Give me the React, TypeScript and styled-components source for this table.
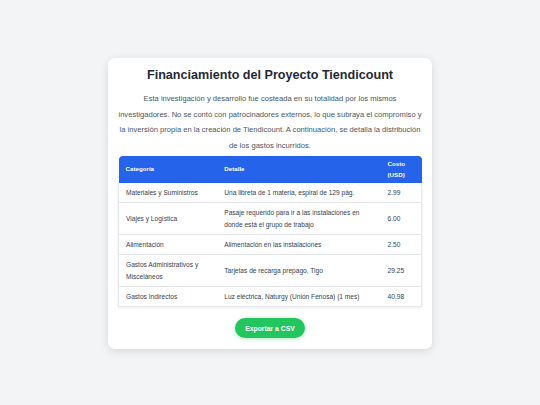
import styled, { createGlobalStyle } from "styled-components";

const GlobalStyle = createGlobalStyle`
    html, body {
        margin: 0;
        padding: 0;
        background: #f3f4f6;
        font-family: "Liberation Sans", Arial, sans-serif;
    }
`;

const Page = styled.div`
    width: 540px;
    height: 405px;
    display: flex;
    justify-content: center;
    align-items: flex-start;
    padding-top: 58px;
    box-sizing: border-box;
`;

const Card = styled.div`
    width: 324px;
    box-sizing: border-box;
    background: #ffffff;
    border-radius: 7px;
    box-shadow: 0 2px 8px rgba(0, 0, 0, 0.12);
    padding: 7px 10px 11px;
    display: flex;
    flex-direction: column;
    align-items: center;
`;

const Title = styled.h1`
    margin: 0;
    font-size: 12.6px;
    line-height: 20px;
    font-weight: 700;
    color: #1f2937;
    text-align: center;
`;

const Intro = styled.p`
    margin: 6px 0 3px;
    font-size: 7.6px;
    line-height: 15.5px;
    color: #4b5563;
    text-align: center;
`;

const Table = styled.table`
    width: 100%;
    border-collapse: collapse;
    box-shadow: 0 1px 3px rgba(0, 0, 0, 0.08);
    font-size: 6.6px;
    color: #374151;
`;

const HeadCell = styled.th<{ $w: number }>`
    width: ${(p) => p.$w}px;
    background: #2563eb;
    color: #ffffff;
    font-weight: 700;
    font-size: 6.2px;
    line-height: 10.5px;
    text-align: left;
    padding: 3px 7px;
    height: 27px;
    box-sizing: border-box;

    &:first-child {
        border-top-left-radius: 4px;
    }
    &:last-child {
        border-top-right-radius: 4px;
    }
`;

const Row = styled.tr`
    border-bottom: 1px solid #e5e7eb;
`;

const Cell = styled.td`
    padding: 3.5px 7px;
    line-height: 12px;
    vertical-align: middle;

    &:first-child {
        border-left: 1px solid #e5e7eb;
    }
    &:last-child {
        border-right: 1px solid #e5e7eb;
    }
`;

const ExportBtn = styled.button`
    flex: none;
    margin-top: 11px;
    width: 70px;
    height: 20px;
    padding: 0;
    border: 0;
    border-radius: 10px;
    background: #22c55e;
    color: #ffffff;
    font-family: "Liberation Sans", Arial, sans-serif;
    font-weight: 700;
    font-size: 6.8px;
    box-shadow: 0 1px 4px rgba(34, 197, 94, 0.35);
    cursor: pointer;
`;

const gastos = [
    { cat: "Materiales y Suministros", det: "Una libreta de 1 materia, espiral de 129 pág.", costo: "2.99" },
    { cat: "Viajes y Logística", det: "Pasaje requerido para ir a las instalaciones en donde está el grupo de trabajo", costo: "6.00" },
    { cat: "Alimentación", det: "Alimentación en las instalaciones", costo: "2.50" },
    { cat: "Gastos Administrativos y Misceláneos", det: "Tarjetas de recarga prepago, Tigo", costo: "29.25" },
    { cat: "Gastos Indirectos", det: "Luz eléctrica, Naturgy (Unión Fenosa) (1 mes)", costo: "40.98" },
];

export default function App() {
    return <>
        <GlobalStyle />
        <Page>
            <Card>
                <Title>Financiamiento del Proyecto Tiendicount</Title>
                <Intro>
                    Esta investigación y desarrollo fue costeada en su totalidad por los mismos investigadores. No se contó con patrocinadores externos, lo que subraya el compromiso y la inversión propia en la creación de Tiendicount. A continuación, se detalla la distribución de los gastos incurridos.
                </Intro>
                <Table>
                    <thead>
                        <tr>
                            <HeadCell $w={99}>Categoría</HeadCell>
                            <HeadCell $w={164}>Detalle</HeadCell>
                            <HeadCell $w={41}>Costo (USD)</HeadCell>
                        </tr>
                    </thead>
                    <tbody>
                        {gastos.map((g) => (
                            <Row key={g.cat}>
                                <Cell>{g.cat}</Cell>
                                <Cell>{g.det}</Cell>
                                <Cell>{g.costo}</Cell>
                            </Row>
                        ))}
                    </tbody>
                </Table>
                <ExportBtn>Exportar a CSV</ExportBtn>
            </Card>
        </Page>
    </>
}
